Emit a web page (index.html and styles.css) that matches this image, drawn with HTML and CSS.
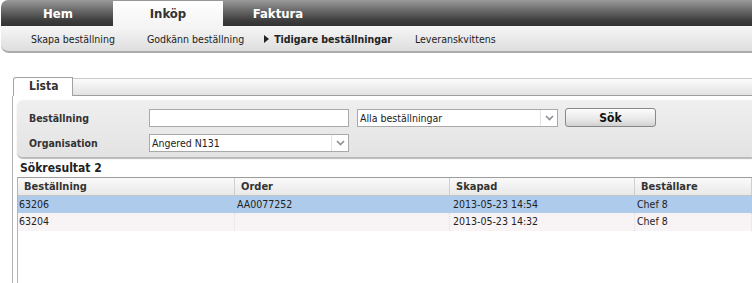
FILE: index.html
```html
<!DOCTYPE html>
<html lang="sv">
<head>
<meta charset="utf-8">
<title>Tidigare beställningar</title>
<link rel="stylesheet" href="styles.css">
</head>
<body>
<header class="topnav">
  <a class="tab">Hem</a>
  <a class="tab active">Inköp</a>
  <a class="tab">Faktura</a>
</header>
<nav class="subnav">
  <a class="sub s1">Skapa beställning</a>
  <a class="sub s2">Godkänn beställning</a>
  <a class="sub s3 current"><span class="arrow"></span>Tidigare beställningar</a>
  <a class="sub s4">Leveranskvittens</a>
</nav>
<section class="tabs">
  <div class="tabstrip">
    <div class="ltab">Lista</div>
    <div class="strip-rest"></div>
  </div>
  <div class="panel">
    <div class="search">
      <div class="frow">
        <label class="flabel">Beställning</label>
        <input class="field" type="text">
        <div class="select wide"><span>Alla beställningar</span><i class="dd"><svg width="9" height="6" viewBox="0 0 9 6"><path d="M1 1 L4.5 4.5 L8 1" fill="none" stroke="#8a8f96" stroke-width="1.6"/></svg></i></div>
        <button class="btn">Sök</button>
      </div>
      <div class="frow">
        <label class="flabel">Organisation</label>
        <div class="select"><span>Angered N131</span><i class="dd"><svg width="9" height="6" viewBox="0 0 9 6"><path d="M1 1 L4.5 4.5 L8 1" fill="none" stroke="#8a8f96" stroke-width="1.6"/></svg></i></div>
      </div>
    </div>
    <div class="result-title">Sökresultat 2</div>
    <div class="grid">
      <div class="ghead">
        <div class="c c1">Beställning</div>
        <div class="c c2">Order</div>
        <div class="c c3">Skapad</div>
        <div class="c c4">Beställare</div>
      </div>
      <div class="grow sel">
        <div class="c c1">63206</div>
        <div class="c c2">AA0077252</div>
        <div class="c c3">2013-05-23 14:54</div>
        <div class="c c4">Chef 8</div>
      </div>
      <div class="grow alt">
        <div class="c c1">63204</div>
        <div class="c c2"></div>
        <div class="c c3">2013-05-23 14:32</div>
        <div class="c c4">Chef 8</div>
      </div>
    </div>
  </div>
</section>
</body>
</html>
```

FILE: styles.css
```css
* { box-sizing: border-box; }
html, body { margin: 0; padding: 0; background: #fff; }
body {
  width: 752px;
  height: 283px;
  overflow: hidden;
  font-family: "DejaVu Sans Condensed", "DejaVu Sans", sans-serif;
  font-size: 10.5px;
  color: #222;
}

.topnav {
  display: flex;
  height: 26px;
  padding: 1px 0 0 2px;
  margin-left: 1px;
  border-top-left-radius: 7px;
  background: linear-gradient(#9a9a9a 0%, #707070 35%, #3c3c3c 80%, #333 100%);
}
.tab {
  width: 110px;
  text-align: center;
  font-weight: bold;
  font-size: 13px;
  line-height: 25px;
  color: #fff;
}
.tab.active {
  background: linear-gradient(#ffffff, #f4f4f4);
  color: #333;
}

.subnav {
  display: flex;
  align-items: center;
  height: 27px;
  margin-left: 1px;
  padding-left: 30px;
  background: linear-gradient(#f6f6f6, #dedede);
  border-bottom: 2px solid #ababab;
  border-bottom-left-radius: 8px;
}
.sub { color: #222; white-space: nowrap; }
.s1 { margin-right: 32px; }
.s2 { margin-right: 20px; }
.s3 { font-weight: bold; margin-right: 23px; display: flex; align-items: center; }
.arrow {
  width: 0; height: 0;
  border-top: 4px solid transparent;
  border-bottom: 4px solid transparent;
  border-left: 5px solid #222;
  margin-right: 5px;
}

.tabs { margin: 24px 0 0 12px; }
.tabstrip { display: flex; height: 19px; }
.ltab {
  width: 60px;
  padding-left: 15px;
  margin-left: 1px;
  border: 1px solid #a2a2a2;
  border-bottom: none;
  border-top-left-radius: 3px;
  background: #fff;
  font-weight: bold;
  font-size: 12px;
  line-height: 17px;
  color: #333;
}
.strip-rest {
  flex: 1;
  margin-top: 1px;
  border-top: 1px solid #c9c9c9;
  border-bottom: 1px solid #9e9e9e;
  background: linear-gradient(#fbfbfb, #e2e2e2);
}

.panel {
  border-left: 1px solid #b4b4b4;
  padding: 4px 0 0 4px;
  height: 187px;
}
.search {
  display: flex;
  flex-direction: column;
  gap: 6px;
  height: 57px;
  padding: 8px 0 0 12px;
  border-radius: 6px 0 0 6px;
  background: linear-gradient(#efefef, #e3e3e3);
  box-shadow: 0 2px 1px #b8b8b8;
}
.frow { display: flex; align-items: center; height: 19px; }
.flabel {
  width: 120px;
  font-weight: bold;
  color: #333;
}
.field {
  width: 200px;
  height: 18px;
  margin: 0 8px 0 0;
  padding: 0;
  border: 1px solid #a9a9a9;
  background: #fff;
}
.select {
  display: flex;
  align-items: center;
  width: 200px;
  height: 18px;
  border: 1px solid #a9a9a9;
  background: #fff;
  padding-left: 2px;
  color: #222;
}
.select span { flex: 1; }
.select.wide { width: 201px; margin-right: 7px; }
.dd {
  display: flex;
  align-items: center;
  justify-content: center;
  width: 17px;
  height: 16px;
  border-left: 1px solid #e2e2e2;
}
.btn {
  width: 91px;
  height: 19px;
  padding: 0;
  border: 1px solid #888;
  border-radius: 3px;
  background: linear-gradient(#fdfdfd, #e4e4e4 70%, #d0d0d0);
  font-family: inherit;
  font-size: 12px;
  font-weight: bold;
  color: #111;
}

.result-title {
  margin: 4px 0 0 3px;
  font-weight: bold;
  font-size: 12px;
  line-height: 14px;
  color: #222;
}
.grid {
  margin-top: 2px;
  border-top: 1px solid #9c9c9c;
  border-left: 1px solid #b4b4b4;
  height: 106px;
}
.ghead, .grow { display: flex; }
.ghead {
  height: 18px;
  background: linear-gradient(#fafafa, #e8e8e8);
  border-bottom: 1px solid #c4c4c4;
}
.ghead .c {
  padding-left: 6px;
  font-weight: bold;
  font-size: 11px;
  color: #333;
  line-height: 17px;
  border-right: 1px solid #cfcfcf;
}
.c1 { width: 217px; }
.c2 { width: 215px; }
.c3 { width: 185px; }
.c4 { flex: 1; }
.grow { height: 17px; }
.grow .c { line-height: 17px; padding-left: 1px; }
.grow .c2, .grow .c3, .grow .c4 { padding-left: 2px; }
.grow.sel { background: #aecbec; }
.grow.alt { background: #f8f3f5; height: 18px; }
.grow.alt .c { border-right: 1px dotted #e4dde0; }
.grow.alt .c3, .grow.sel .c3 { padding-left: 3px; }
```
